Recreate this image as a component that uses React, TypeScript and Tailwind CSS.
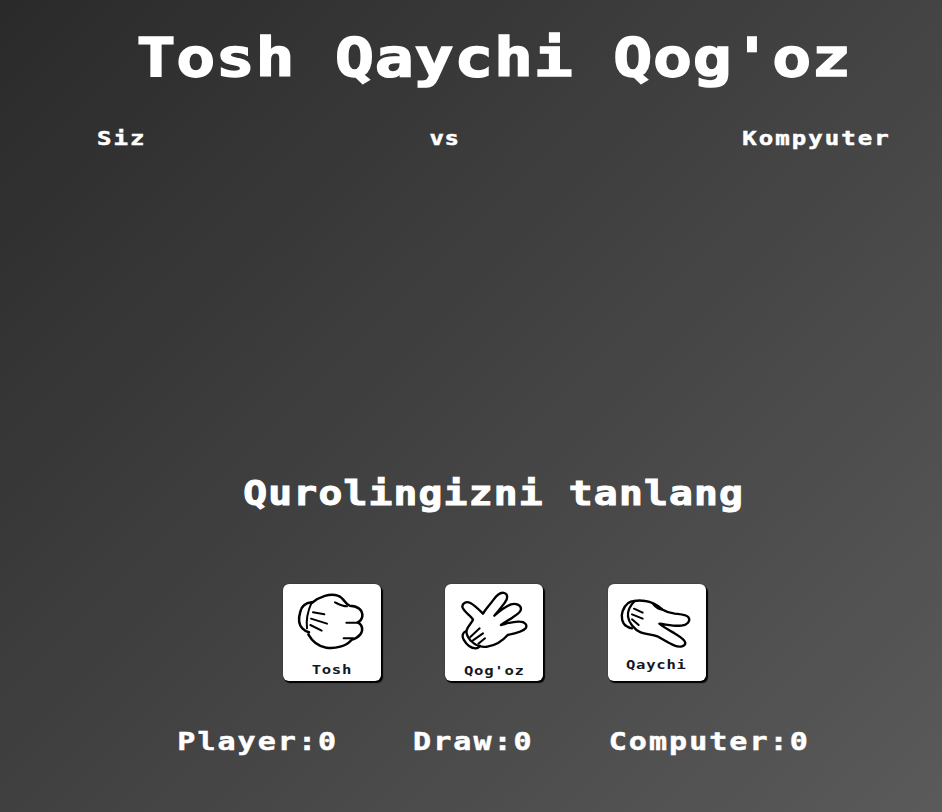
const mono = "font-['DejaVu_Sans_Mono','Liberation_Mono',monospace] font-bold text-white";

function Fist() {
  return (
    <svg width="98" height="72" viewBox="40 27 294 216" fill="none" stroke="#000" strokeWidth="7.5" strokeLinecap="round" strokeLinejoin="round">
      <path d="M126 82C106 84 96 94 92 110C86 130 88 150 98 160C104 166 110 170 118 172" />
      <path d="M126 82C118 100 108 130 112 160" strokeWidth="6" />
      <path d="M126 84C150 64 182 54 204 62C224 68 226 88 240 92C262 92 280 104 278 124C276 134 270 140 264 142C278 148 282 166 272 178C264 188 254 192 246 194C230 214 196 222 170 218C146 214 128 200 116 178" />
      <path d="M196 82C208 88 218 94 232 94" strokeWidth="6" />
      <path d="M230 143H264M222 190H250" strokeWidth="6" />
      <path d="M130 112L164 118M124 131L172 146M122 150L156 167" strokeWidth="6" />
    </svg>
  );
}

function Paper() {
  return (
    <svg width="98" height="72" viewBox="32 27 294 216" fill="none" stroke="#000" strokeWidth="7" strokeLinecap="round" strokeLinejoin="round">
      <path d="M96 168C84 172 82 184 88 194C96 208 110 220 124 220C130 220 134 216 136 212" />
      <path d="M96 168C100 152 112 146 116 134C110 122 88 110 84 96C84 84 96 78 108 84C120 90 134 104 146 116C152 104 166 90 176 76C186 62 198 50 210 54C222 58 220 72 212 82C202 96 190 110 180 122C196 108 214 94 230 88C244 84 260 90 260 102C260 112 246 120 234 128C222 136 210 142 200 150C216 146 238 138 256 140C272 140 280 150 274 160C266 170 240 176 220 180C206 196 186 210 162 214C146 218 124 214 108 196C100 186 96 178 96 168Z" />
      <path d="M108 186L136 160M116 196L146 175M132 206L152 190" strokeWidth="6" />
    </svg>
  );
}

function Scissors() {
  return (
    <svg width="98" height="72" viewBox="32 27 294 216" fill="none" stroke="#000" strokeWidth="7" strokeLinecap="round" strokeLinejoin="round">
      <path d="M112 78C94 78 82 92 76 108C70 124 74 146 88 154C94 158 100 160 104 160" />
      <path d="M112 78C100 90 90 106 92 124C94 142 110 164 130 172C146 178 166 178 180 184C198 194 216 206 232 212C248 218 264 214 264 204C264 194 246 184 230 174C216 166 198 156 186 146C206 148 230 154 252 152C270 150 280 138 274 128C268 118 250 118 232 116C218 114 206 110 196 104C182 92 164 80 144 78C132 76 120 76 112 78Z" />
      <path d="M168 88C176 98 186 104 196 104" strokeWidth="6" />
      <path d="M110 101L136 113M104 118L136 131M104 133L124 150" strokeWidth="6" />
    </svg>
  );
}

function Choice({ label, icon, labelClass }: { label: string; icon: React.ReactNode; labelClass: string }) {
  return (
    <button className="flex h-[97px] w-[98px] flex-col items-center overflow-hidden rounded-md bg-white shadow-[1.5px_2px_1px_#000,0_0_1px_#000]">
      {icon}
      <span className={`font-['DejaVu_Sans_Mono','Liberation_Mono',monospace] scale-x-[1.2] text-[13px] font-bold tracking-[0.6px] leading-none text-[#111827] ${labelClass}`}>{label}</span>
    </button>
  );
}

export default function App() {
  return (
    <div className="h-[812px] w-[942px] overflow-hidden bg-[linear-gradient(135deg,#2a2a2a,#5a5a5a)] pl-[97px]">
      <div className="flex w-[794px] flex-col items-center">
        <h1 className={`${mono} mt-[26px] scale-x-[1.2] text-[54px] leading-[64px] tracking-[0.6px] [-webkit-text-stroke:1.5px_white]`}>Tosh Qaychi Qog'oz</h1>
        <div className={`${mono} mt-[36px] flex w-full items-center justify-between text-[20px] leading-6 tracking-[1.7px] [-webkit-text-stroke:0.5px_white]`}>
          <span className="origin-left scale-x-[1.2]">Siz</span>
          <span className="mr-[17px] scale-x-[1.2] tracking-[0.5px]">vs</span>
          <span className="origin-right scale-x-[1.2]">Kompyuter</span>
        </div>
        <h2 className={`${mono} mt-[324px] scale-x-[1.2] text-[33px] leading-10 tracking-[1px] [-webkit-text-stroke:1px_white]`}>Qurolingizni tanlang</h2>
        <div className="mt-[70px] flex gap-[64.5px]">
          <Choice label="Tosh" icon={<Fist />} labelClass="mt-[7px]" />
          <Choice label="Qog'oz" icon={<Paper />} labelClass="mt-[8px]" />
          <Choice label="Qaychi" icon={<Scissors />} labelClass="mt-[2px]" />
        </div>
        <div className={`${mono} mt-[45px] flex scale-x-[1.2] gap-[62.5px] text-[25px] leading-8 tracking-[1.7px] [-webkit-text-stroke:0.5px_white]`}>
          <span>Player:0</span>
          <span>Draw:0</span>
          <span>Computer:0</span>
        </div>
      </div>
    </div>
  );
}
